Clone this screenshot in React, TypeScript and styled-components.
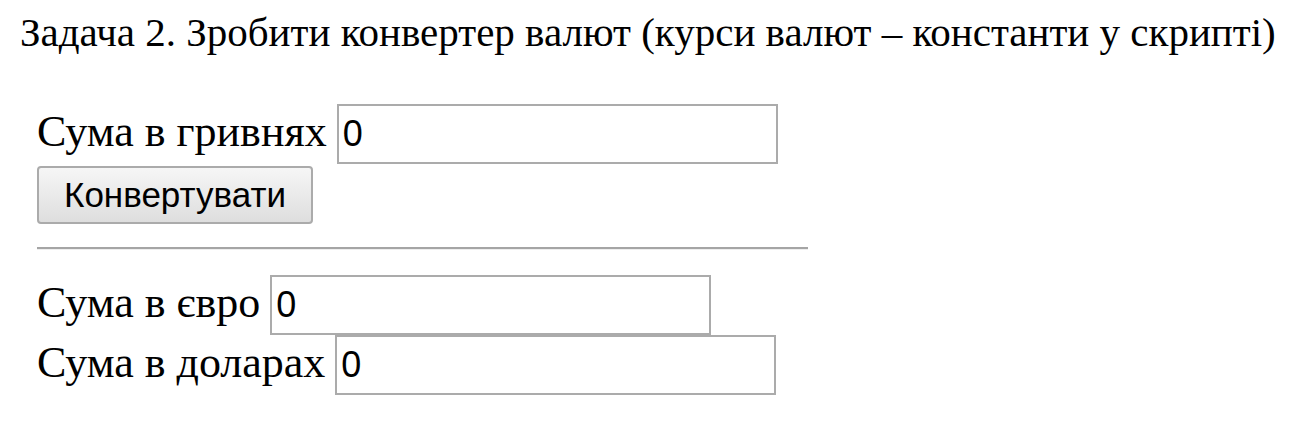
import React from "react";
import styled, { createGlobalStyle } from "styled-components";

const Global = createGlobalStyle`
  html, body { margin: 0; padding: 0; background: #ffffff; }
  body { font-family: "Liberation Serif", "Times New Roman", serif; color: #000; }
`;

const Page = styled.div`
  padding: 0 0 0 20px;
`;

const Title = styled.h2`
  margin: 0;
  padding-top: 9px;
  font-size: 41px;
  font-weight: normal;
  line-height: 46px;
  white-space: nowrap;
`;

const Form = styled.div`
  display: flex;
  flex-direction: column;
  align-items: flex-start;
  margin: 49px 0 0 17px;
`;

const Row = styled.div`
  display: flex;
  align-items: baseline;
  gap: 10px;
`;

const Label = styled.span`
  font-size: 44px;
  line-height: 50px;
`;

const Field = styled.input`
  box-sizing: border-box;
  width: 441px;
  height: 60px;
  margin: 0;
  padding: 0 4px;
  border: 2px solid #ababab;
  font-family: "Liberation Sans", Arial, sans-serif;
  font-size: 36px;
  color: #000;
  background: #fff;
  outline: none;
`;

const Button = styled.button`
  box-sizing: border-box;
  width: 276px;
  height: 58px;
  margin-top: 2px;
  border: 2px solid #ababab;
  border-radius: 4px;
  background: linear-gradient(#f6f6f6, #dedede);
  font-family: "Liberation Sans", Arial, sans-serif;
  font-size: 35px;
  color: #000;
  padding: 0;
`;

const Divider = styled.hr`
  box-sizing: border-box;
  width: 771px;
  height: 3px;
  margin: 23px 0 25px 0;
  border: 0;
  border-top: 2px solid #a5a5a5;
  border-bottom: 1px solid #eeeeee;
`;

export default function App() {
  return (
    <Page>
      <Global />
      <Title>Задача 2. Зробити конвертер валют (курси валют – константи у скрипті)</Title>
      <Form>
        <Row>
          <Label>Сума в гривнях</Label>
          <Field defaultValue="0" />
        </Row>
        <Button>Конвертувати</Button>
        <Divider />
        <Row>
          <Label>Сума в євро</Label>
          <Field defaultValue="0" />
        </Row>
        <Row>
          <Label>Сума в доларах</Label>
          <Field defaultValue="0" />
        </Row>
      </Form>
    </Page>
  );
}
